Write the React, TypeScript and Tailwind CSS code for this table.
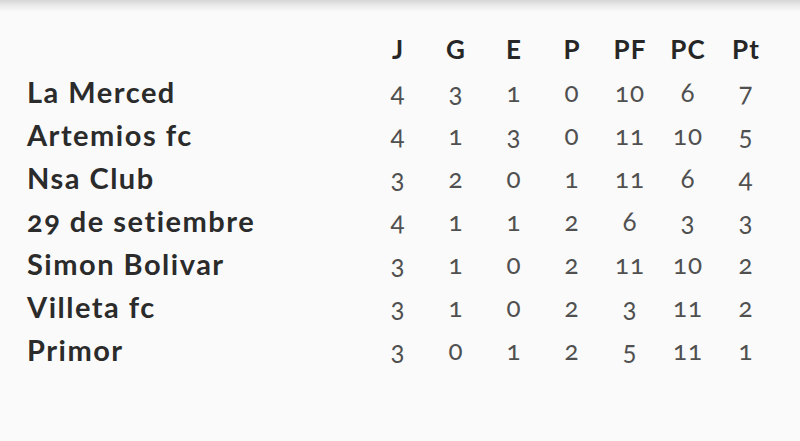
import React from "react";

const rows: [string, number[]][] = [
  ["La Merced", [4, 3, 1, 0, 10, 6, 7]],
  ["Artemios fc", [4, 1, 3, 0, 11, 10, 5]],
  ["Nsa Club", [3, 2, 0, 1, 11, 6, 4]],
  ["29 de setiembre", [4, 1, 1, 2, 6, 3, 3]],
  ["Simon Bolivar", [3, 1, 0, 2, 11, 10, 2]],
  ["Villeta fc", [3, 1, 0, 2, 3, 11, 2]],
  ["Primor", [3, 0, 1, 2, 5, 11, 1]],
];

const heads = ["J", "G", "E", "P", "PF", "PC", "Pt"];

export default function App() {
  return (
    <div
      className="w-[800px] h-[441px] bg-[#fafafa] overflow-hidden"
      style={{ fontFamily: "Lato, 'Open Sans', sans-serif" }}
    >
      <div className="h-[12px] bg-gradient-to-b from-[#d6d6d6] via-[#ececec] to-[#fafafa]" />
      <div className="pt-[15px] pl-[27px] grid grid-cols-[342px_repeat(7,58px)] auto-rows-[43px] items-center">
        <div />
        {heads.map((h) => (
          <div key={h} className="text-center text-[26px] font-bold text-[#262626] leading-none tracking-[1px]">
            {h}
          </div>
        ))}
        {rows.map(([name, vals]) => (
          <React.Fragment key={name}>
            <div className="text-[29px] font-bold text-[#2b2b2b] leading-none tracking-[1.5px] oldstyle-nums whitespace-nowrap">
              {name}
            </div>
            {vals.map((v, i) => (
              <div key={i} className="text-center text-[26px] text-[#505050] leading-none tracking-[1px] oldstyle-nums">
                {v}
              </div>
            ))}
          </React.Fragment>
        ))}
      </div>
    </div>
  );
}
